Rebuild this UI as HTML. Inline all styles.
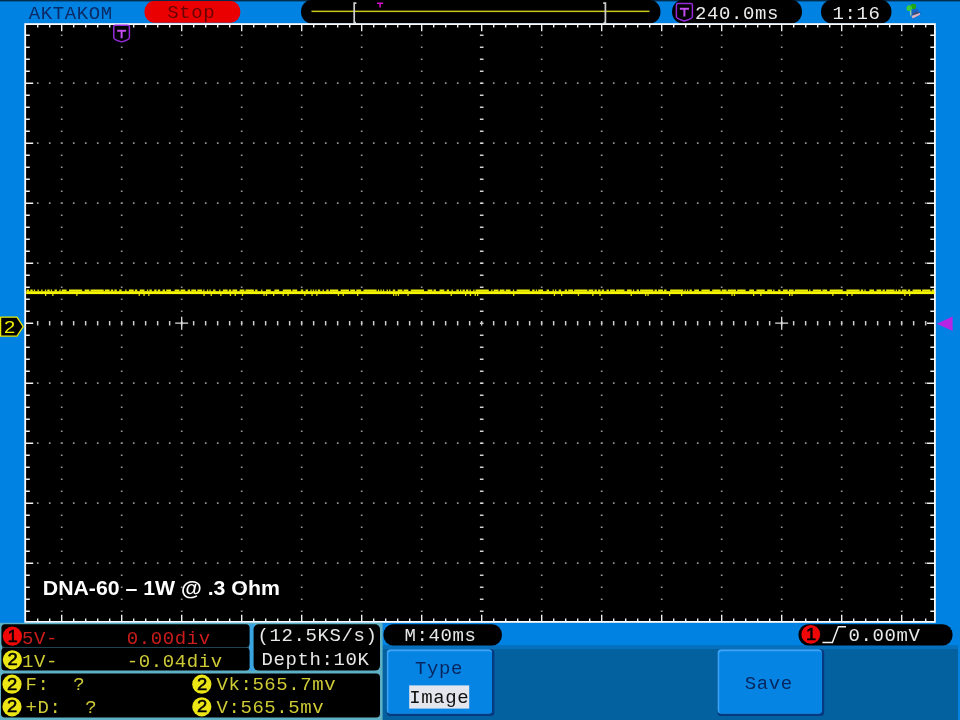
<!DOCTYPE html>
<html lang="en">
<head>
<meta charset="utf-8">
<title>AKTAKOM oscilloscope - DNA-60 1W @ .3 Ohm</title>
<style>
html,body{margin:0;padding:0;background:#0082e2;overflow:hidden}
body{width:960px;height:720px}
svg{display:block;position:absolute;left:0;top:0;will-change:transform}
svg text{font-family:"Liberation Mono",monospace;font-size:19px;letter-spacing:0.6px;white-space:pre}
svg text.cal{font-family:"Liberation Sans",sans-serif;font-weight:bold;font-size:20px;letter-spacing:0}
svg text.ico{font-family:"Liberation Sans",sans-serif;font-weight:normal;letter-spacing:0}
</style>
</head>
<body>
<svg width="960" height="720" viewBox="0 0 960 720">

<rect x="0" y="0" width="960" height="720" fill="#0082e2"/>
<rect x="0" y="0" width="960" height="1.4" fill="#04223c" opacity="0.9"/>
<text transform="translate(28.7,19.2) scale(1,0.95)" xml:space="preserve" fill="#0a2a66" >AKTAKOM</text>
<rect x="144.4" y="1.1" width="96" height="21.6" rx="9.5" ry="10.8" fill="#ea0000"/>
<text transform="translate(167.2,18) scale(1,0.95)" xml:space="preserve" fill="#6a0404" >Stop</text>
<rect x="301" y="0" width="359.5" height="23.5" rx="10.5" ry="11.7" fill="#000"/>
<rect x="311.5" y="10.6" width="338" height="1.5" fill="#c8c81a"/>
<path d="M356.4 3.2 H354.2 V22.6 H356" fill="none" stroke="#cfcfcf" stroke-width="1.7"/>
<path d="M603.2 3.2 H605.4 V22.6 H603.6" fill="none" stroke="#cfcfcf" stroke-width="1.7"/>
<path d="M377 3.3 H383.2 M380.1 3.3 V7.6" fill="none" stroke="#d410c8" stroke-width="1.5"/>
<rect x="672" y="0" width="130" height="23.5" rx="10.5" ry="11.7" fill="#000"/>
<path d="M677.9 3.4 H690.9 Q692.4 3.4 692.4 4.9 V16.8 Q692.4 18.8 684.4 21.0 Q676.4 18.8 676.4 16.8 V4.9 Q676.4 3.4 677.9 3.4 Z" fill="#000" stroke="#962ad8" stroke-width="1.5" stroke-linejoin="round"/><path d="M679.8 8.8 H689.0 M684.4 8.8 V16.4" fill="none" stroke="#c44cf0" stroke-width="2"/>
<text transform="translate(695.0,19.2) scale(1,0.95)" xml:space="preserve" fill="#ececec" >240.0ms</text>
<rect x="821" y="0" width="70.5" height="23.5" rx="10.5" ry="11.7" fill="#000"/>
<text transform="translate(832.6,19.2) scale(1,0.95)" xml:space="preserve" fill="#ececec" >1:16</text>
<g><path d="M911.6 9.8 L916.6 8.2 L921.4 14 L913.2 19.2 L910.4 15.6 Z" fill="#1464c6"/><path d="M912.6 13.4 L917.4 11.6 L919 13.4 L913.4 15.8 Z" fill="#3c4c74"/><path d="M911.4 16 L919.6 13 L920.4 14.6 L912.8 18.6 Z" fill="#dcb4c0"/><path d="M910.6 10 L910.8 15.4" stroke="#9cd4a8" stroke-width="1.3" fill="none"/><ellipse cx="913.2" cy="6.4" rx="3" ry="2.7" fill="#22a414"/><ellipse cx="909.2" cy="8.2" rx="2.7" ry="2.9" fill="#3ccc3c"/></g>
<rect x="25.2" y="24.1" width="909.7" height="597.8" fill="#000"/>
<g><line x1="61.7" y1="34.4" x2="61.7" y2="619.9" stroke="#8e8e8e" stroke-width="1.8" stroke-dasharray="1.7 10.3"/>
<line x1="121.7" y1="34.4" x2="121.7" y2="619.9" stroke="#8e8e8e" stroke-width="1.8" stroke-dasharray="1.7 10.3"/>
<line x1="181.7" y1="34.4" x2="181.7" y2="619.9" stroke="#8e8e8e" stroke-width="1.8" stroke-dasharray="1.7 10.3"/>
<line x1="241.7" y1="34.4" x2="241.7" y2="619.9" stroke="#8e8e8e" stroke-width="1.8" stroke-dasharray="1.7 10.3"/>
<line x1="301.7" y1="34.4" x2="301.7" y2="619.9" stroke="#8e8e8e" stroke-width="1.8" stroke-dasharray="1.7 10.3"/>
<line x1="361.7" y1="34.4" x2="361.7" y2="619.9" stroke="#8e8e8e" stroke-width="1.8" stroke-dasharray="1.7 10.3"/>
<line x1="421.7" y1="34.4" x2="421.7" y2="619.9" stroke="#8e8e8e" stroke-width="1.8" stroke-dasharray="1.7 10.3"/>
<line x1="541.7" y1="34.4" x2="541.7" y2="619.9" stroke="#8e8e8e" stroke-width="1.8" stroke-dasharray="1.7 10.3"/>
<line x1="601.7" y1="34.4" x2="601.7" y2="619.9" stroke="#8e8e8e" stroke-width="1.8" stroke-dasharray="1.7 10.3"/>
<line x1="661.7" y1="34.4" x2="661.7" y2="619.9" stroke="#8e8e8e" stroke-width="1.8" stroke-dasharray="1.7 10.3"/>
<line x1="721.7" y1="34.4" x2="721.7" y2="619.9" stroke="#8e8e8e" stroke-width="1.8" stroke-dasharray="1.7 10.3"/>
<line x1="781.7" y1="34.4" x2="781.7" y2="619.9" stroke="#8e8e8e" stroke-width="1.8" stroke-dasharray="1.7 10.3"/>
<line x1="841.7" y1="34.4" x2="841.7" y2="619.9" stroke="#8e8e8e" stroke-width="1.8" stroke-dasharray="1.7 10.3"/>
<line x1="901.7" y1="34.4" x2="901.7" y2="619.9" stroke="#8e8e8e" stroke-width="1.8" stroke-dasharray="1.7 10.3"/>
<line x1="36.9" y1="83.2" x2="932.9" y2="83.2" stroke="#8e8e8e" stroke-width="1.8" stroke-dasharray="1.7 10.3"/>
<line x1="36.9" y1="143.2" x2="932.9" y2="143.2" stroke="#8e8e8e" stroke-width="1.8" stroke-dasharray="1.7 10.3"/>
<line x1="36.9" y1="203.2" x2="932.9" y2="203.2" stroke="#8e8e8e" stroke-width="1.8" stroke-dasharray="1.7 10.3"/>
<line x1="36.9" y1="263.2" x2="932.9" y2="263.2" stroke="#8e8e8e" stroke-width="1.8" stroke-dasharray="1.7 10.3"/>
<line x1="36.9" y1="383.2" x2="932.9" y2="383.2" stroke="#8e8e8e" stroke-width="1.8" stroke-dasharray="1.7 10.3"/>
<line x1="36.9" y1="443.2" x2="932.9" y2="443.2" stroke="#8e8e8e" stroke-width="1.8" stroke-dasharray="1.7 10.3"/>
<line x1="36.9" y1="503.2" x2="932.9" y2="503.2" stroke="#8e8e8e" stroke-width="1.8" stroke-dasharray="1.7 10.3"/>
<line x1="36.9" y1="563.2" x2="932.9" y2="563.2" stroke="#8e8e8e" stroke-width="1.8" stroke-dasharray="1.7 10.3"/>
<line x1="481.7" y1="34.4" x2="481.7" y2="619.9" stroke="#d2d2d2" stroke-width="3.6" stroke-dasharray="1.6 10.4"/>
<line x1="36.9" y1="323.2" x2="932.9" y2="323.2" stroke="#cccccc" stroke-width="4.6" stroke-dasharray="1.5 10.5"/>
<path d="M175.2 323.2 H188.2 M181.7 316.7 V329.7" stroke="#dedede" stroke-width="1.3" fill="none"/>
<path d="M775.2 323.2 H788.2 M781.7 316.7 V329.7" stroke="#dedede" stroke-width="1.3" fill="none"/>
<path d="M25.2 35.2 h4.6 M934.9 35.2 h-4.6 M25.2 47.2 h4.6 M934.9 47.2 h-4.6 M25.2 59.2 h4.6 M934.9 59.2 h-4.6 M25.2 71.2 h4.6 M934.9 71.2 h-4.6 M25.2 83.2 h8 M934.9 83.2 h-8 M25.2 95.2 h4.6 M934.9 95.2 h-4.6 M25.2 107.2 h4.6 M934.9 107.2 h-4.6 M25.2 119.2 h4.6 M934.9 119.2 h-4.6 M25.2 131.2 h4.6 M934.9 131.2 h-4.6 M25.2 143.2 h8 M934.9 143.2 h-8 M25.2 155.2 h4.6 M934.9 155.2 h-4.6 M25.2 167.2 h4.6 M934.9 167.2 h-4.6 M25.2 179.2 h4.6 M934.9 179.2 h-4.6 M25.2 191.2 h4.6 M934.9 191.2 h-4.6 M25.2 203.2 h8 M934.9 203.2 h-8 M25.2 215.2 h4.6 M934.9 215.2 h-4.6 M25.2 227.2 h4.6 M934.9 227.2 h-4.6 M25.2 239.2 h4.6 M934.9 239.2 h-4.6 M25.2 251.2 h4.6 M934.9 251.2 h-4.6 M25.2 263.2 h8 M934.9 263.2 h-8 M25.2 275.2 h4.6 M934.9 275.2 h-4.6 M25.2 287.2 h4.6 M934.9 287.2 h-4.6 M25.2 299.2 h4.6 M934.9 299.2 h-4.6 M25.2 311.2 h4.6 M934.9 311.2 h-4.6 M25.2 323.2 h8 M934.9 323.2 h-8 M25.2 335.2 h4.6 M934.9 335.2 h-4.6 M25.2 347.2 h4.6 M934.9 347.2 h-4.6 M25.2 359.2 h4.6 M934.9 359.2 h-4.6 M25.2 371.2 h4.6 M934.9 371.2 h-4.6 M25.2 383.2 h8 M934.9 383.2 h-8 M25.2 395.2 h4.6 M934.9 395.2 h-4.6 M25.2 407.2 h4.6 M934.9 407.2 h-4.6 M25.2 419.2 h4.6 M934.9 419.2 h-4.6 M25.2 431.2 h4.6 M934.9 431.2 h-4.6 M25.2 443.2 h8 M934.9 443.2 h-8 M25.2 455.2 h4.6 M934.9 455.2 h-4.6 M25.2 467.2 h4.6 M934.9 467.2 h-4.6 M25.2 479.2 h4.6 M934.9 479.2 h-4.6 M25.2 491.2 h4.6 M934.9 491.2 h-4.6 M25.2 503.2 h8 M934.9 503.2 h-8 M25.2 515.2 h4.6 M934.9 515.2 h-4.6 M25.2 527.2 h4.6 M934.9 527.2 h-4.6 M25.2 539.2 h4.6 M934.9 539.2 h-4.6 M25.2 551.2 h4.6 M934.9 551.2 h-4.6 M25.2 563.2 h8 M934.9 563.2 h-8 M25.2 575.2 h4.6 M934.9 575.2 h-4.6 M25.2 587.2 h4.6 M934.9 587.2 h-4.6 M25.2 599.2 h4.6 M934.9 599.2 h-4.6 M25.2 611.2 h4.6 M934.9 611.2 h-4.6 M37.7 24.1 v3.3 M37.7 621.9 v-3.3 M49.7 24.1 v3.3 M49.7 621.9 v-3.3 M61.7 24.1 v7.2 M61.7 621.9 v-7.2 M73.7 24.1 v3.3 M73.7 621.9 v-3.3 M85.7 24.1 v3.3 M85.7 621.9 v-3.3 M97.7 24.1 v3.3 M97.7 621.9 v-3.3 M109.7 24.1 v3.3 M109.7 621.9 v-3.3 M121.7 24.1 v7.2 M121.7 621.9 v-7.2 M133.7 24.1 v3.3 M133.7 621.9 v-3.3 M145.7 24.1 v3.3 M145.7 621.9 v-3.3 M157.7 24.1 v3.3 M157.7 621.9 v-3.3 M169.7 24.1 v3.3 M169.7 621.9 v-3.3 M181.7 24.1 v7.2 M181.7 621.9 v-7.2 M193.7 24.1 v3.3 M193.7 621.9 v-3.3 M205.7 24.1 v3.3 M205.7 621.9 v-3.3 M217.7 24.1 v3.3 M217.7 621.9 v-3.3 M229.7 24.1 v3.3 M229.7 621.9 v-3.3 M241.7 24.1 v7.2 M241.7 621.9 v-7.2 M253.7 24.1 v3.3 M253.7 621.9 v-3.3 M265.7 24.1 v3.3 M265.7 621.9 v-3.3 M277.7 24.1 v3.3 M277.7 621.9 v-3.3 M289.7 24.1 v3.3 M289.7 621.9 v-3.3 M301.7 24.1 v7.2 M301.7 621.9 v-7.2 M313.7 24.1 v3.3 M313.7 621.9 v-3.3 M325.7 24.1 v3.3 M325.7 621.9 v-3.3 M337.7 24.1 v3.3 M337.7 621.9 v-3.3 M349.7 24.1 v3.3 M349.7 621.9 v-3.3 M361.7 24.1 v7.2 M361.7 621.9 v-7.2 M373.7 24.1 v3.3 M373.7 621.9 v-3.3 M385.7 24.1 v3.3 M385.7 621.9 v-3.3 M397.7 24.1 v3.3 M397.7 621.9 v-3.3 M409.7 24.1 v3.3 M409.7 621.9 v-3.3 M421.7 24.1 v7.2 M421.7 621.9 v-7.2 M433.7 24.1 v3.3 M433.7 621.9 v-3.3 M445.7 24.1 v3.3 M445.7 621.9 v-3.3 M457.7 24.1 v3.3 M457.7 621.9 v-3.3 M469.7 24.1 v3.3 M469.7 621.9 v-3.3 M481.7 24.1 v7.2 M481.7 621.9 v-7.2 M493.7 24.1 v3.3 M493.7 621.9 v-3.3 M505.7 24.1 v3.3 M505.7 621.9 v-3.3 M517.7 24.1 v3.3 M517.7 621.9 v-3.3 M529.7 24.1 v3.3 M529.7 621.9 v-3.3 M541.7 24.1 v7.2 M541.7 621.9 v-7.2 M553.7 24.1 v3.3 M553.7 621.9 v-3.3 M565.7 24.1 v3.3 M565.7 621.9 v-3.3 M577.7 24.1 v3.3 M577.7 621.9 v-3.3 M589.7 24.1 v3.3 M589.7 621.9 v-3.3 M601.7 24.1 v7.2 M601.7 621.9 v-7.2 M613.7 24.1 v3.3 M613.7 621.9 v-3.3 M625.7 24.1 v3.3 M625.7 621.9 v-3.3 M637.7 24.1 v3.3 M637.7 621.9 v-3.3 M649.7 24.1 v3.3 M649.7 621.9 v-3.3 M661.7 24.1 v7.2 M661.7 621.9 v-7.2 M673.7 24.1 v3.3 M673.7 621.9 v-3.3 M685.7 24.1 v3.3 M685.7 621.9 v-3.3 M697.7 24.1 v3.3 M697.7 621.9 v-3.3 M709.7 24.1 v3.3 M709.7 621.9 v-3.3 M721.7 24.1 v7.2 M721.7 621.9 v-7.2 M733.7 24.1 v3.3 M733.7 621.9 v-3.3 M745.7 24.1 v3.3 M745.7 621.9 v-3.3 M757.7 24.1 v3.3 M757.7 621.9 v-3.3 M769.7 24.1 v3.3 M769.7 621.9 v-3.3 M781.7 24.1 v7.2 M781.7 621.9 v-7.2 M793.7 24.1 v3.3 M793.7 621.9 v-3.3 M805.7 24.1 v3.3 M805.7 621.9 v-3.3 M817.7 24.1 v3.3 M817.7 621.9 v-3.3 M829.7 24.1 v3.3 M829.7 621.9 v-3.3 M841.7 24.1 v7.2 M841.7 621.9 v-7.2 M853.7 24.1 v3.3 M853.7 621.9 v-3.3 M865.7 24.1 v3.3 M865.7 621.9 v-3.3 M877.7 24.1 v3.3 M877.7 621.9 v-3.3 M889.7 24.1 v3.3 M889.7 621.9 v-3.3 M901.7 24.1 v7.2 M901.7 621.9 v-7.2 M913.7 24.1 v3.3 M913.7 621.9 v-3.3 M925.7 24.1 v3.3 M925.7 621.9 v-3.3" stroke="#f2f2f2" stroke-width="1.4" fill="none"/>
<rect x="25.2" y="24.1" width="909.7" height="597.8" fill="none" stroke="#fbfbfb" stroke-width="1.8"/></g>
<g><rect x="26.2" y="291.20000000000005" width="908.2" height="2.9" fill="#f6f600"/>
<path d="M26.7 290.4 h2.4 M30.3 290.4 h2.4 M33.8 290.4 h1.3 M37.5 290.4 h1.3 M41.2 290.4 h1.3 M44.9 290.4 h1.3 M47.3 290.4 h2.4 M50.8 290.4 h1.3 M54.5 290.4 h2.4 M59.3 290.4 h1.3 M61.8 290.4 h4.8 M69.0 290.4 h13.2 M84.6 290.4 h4.8 M90.5 290.4 h13.2 M104.8 290.4 h4.8 M110.8 290.4 h2.4 M114.4 290.4 h2.4 M119.2 290.4 h2.4 M125.2 290.4 h1.3 M128.9 290.4 h4.8 M134.9 290.4 h2.4 M139.7 290.4 h4.8 M146.9 290.4 h1.3 M149.4 290.4 h2.4 M154.2 290.4 h2.4 M157.8 290.4 h2.4 M162.6 290.4 h2.4 M166.2 290.4 h4.8 M174.6 290.4 h4.8 M180.5 290.4 h4.8 M187.7 290.4 h2.4 M191.3 290.4 h4.8 M197.3 290.4 h4.8 M203.2 290.4 h1.3 M206.9 290.4 h1.3 M209.4 290.4 h1.3 M213.1 290.4 h2.4 M219.1 290.4 h1.3 M222.8 290.4 h4.8 M228.8 290.4 h2.4 M232.4 290.4 h4.8 M239.6 290.4 h4.8 M245.5 290.4 h8.4 M255.1 290.4 h2.4 M261.1 290.4 h1.3 M266.0 290.4 h4.8 M274.4 290.4 h4.8 M282.8 290.4 h8.4 M292.4 290.4 h4.8 M300.8 290.4 h2.4 M305.6 290.4 h2.4 M310.4 290.4 h1.3 M312.8 290.4 h1.3 M315.3 290.4 h1.3 M317.8 290.4 h2.4 M322.6 290.4 h1.3 M326.3 290.4 h2.4 M329.9 290.4 h8.4 M340.7 290.4 h8.4 M350.3 290.4 h4.8 M356.3 290.4 h4.8 M363.5 290.4 h13.2 M377.9 290.4 h1.3 M380.4 290.4 h1.3 M382.9 290.4 h1.3 M386.6 290.4 h1.3 M389.1 290.4 h1.3 M392.8 290.4 h2.4 M397.6 290.4 h4.8 M403.6 290.4 h4.8 M410.8 290.4 h13.2 M427.6 290.4 h4.8 M433.5 290.4 h2.4 M439.5 290.4 h4.8 M446.7 290.4 h2.4 M451.5 290.4 h1.3 M456.4 290.4 h2.4 M460.0 290.4 h1.3 M462.5 290.4 h2.4 M466.0 290.4 h2.4 M469.5 290.4 h1.3 M473.2 290.4 h1.3 M475.6 290.4 h13.2 M491.2 290.4 h1.3 M493.7 290.4 h4.8 M499.7 290.4 h4.8 M505.7 290.4 h4.8 M512.9 290.4 h1.3 M516.6 290.4 h13.2 M532.2 290.4 h2.4 M535.8 290.4 h1.3 M538.2 290.4 h4.8 M546.6 290.4 h2.4 M552.6 290.4 h1.3 M555.0 290.4 h1.3 M558.7 290.4 h2.4 M564.7 290.4 h2.4 M568.2 290.4 h4.8 M574.2 290.4 h13.2 M588.5 290.4 h4.8 M594.5 290.4 h2.4 M598.1 290.4 h2.4 M601.7 290.4 h2.4 M606.5 290.4 h2.4 M610.1 290.4 h4.8 M616.1 290.4 h8.4 M626.9 290.4 h4.8 M632.9 290.4 h1.3 M636.6 290.4 h2.4 M640.1 290.4 h13.2 M654.5 290.4 h2.4 M658.1 290.4 h4.8 M664.1 290.4 h2.4 M670.1 290.4 h13.2 M684.5 290.4 h1.3 M686.9 290.4 h1.3 M689.4 290.4 h2.4 M694.2 290.4 h4.8 M701.4 290.4 h8.4 M712.2 290.4 h8.4 M721.8 290.4 h4.8 M727.7 290.4 h8.4 M737.2 290.4 h8.4 M749.2 290.4 h4.8 M756.4 290.4 h8.4 M767.2 290.4 h4.8 M773.2 290.4 h1.3 M778.1 290.4 h2.4 M782.9 290.4 h4.8 M788.8 290.4 h4.8 M794.8 290.4 h13.2 M809.1 290.4 h1.3 M812.8 290.4 h8.4 M822.4 290.4 h4.8 M829.6 290.4 h13.2 M846.4 290.4 h13.2 M860.8 290.4 h2.4 M864.4 290.4 h1.3 M869.3 290.4 h4.8 M876.5 290.4 h4.8 M882.5 290.4 h2.4 M886.1 290.4 h8.4 M895.7 290.4 h1.3 M898.2 290.4 h2.4 M901.8 290.4 h4.8 M907.8 290.4 h2.4 M912.6 290.4 h8.4 M922.1 290.4 h8.4 M931.7 290.4 h2.2" stroke="#f0f000" stroke-width="2" fill="none"/>
<path d="M45.0 294.9 h1.3 M52.2 294.9 h1.3 M76.2 294.9 h1.3 M138.6 294.9 h1.3 M143.4 294.9 h1.3 M148.2 294.9 h1.3 M203.4 294.9 h1.3 M210.6 294.9 h1.3 M220.2 294.9 h1.3 M229.8 294.9 h1.3 M234.6 294.9 h1.3 M241.8 294.9 h1.3 M263.4 294.9 h1.3 M265.8 294.9 h1.3 M273.0 294.9 h1.3 M282.6 294.9 h1.3 M287.4 294.9 h1.3 M304.2 294.9 h1.3 M311.4 294.9 h1.3 M316.2 294.9 h1.3 M337.8 294.9 h1.3 M342.6 294.9 h1.3 M357.0 294.9 h1.3 M393.0 294.9 h1.3 M395.4 294.9 h1.3 M397.8 294.9 h1.3 M407.4 294.9 h1.3 M450.6 294.9 h1.3 M465.0 294.9 h1.3 M469.8 294.9 h1.3 M474.6 294.9 h1.3 M477.0 294.9 h1.3 M513.0 294.9 h1.3 M553.8 294.9 h1.3 M561.0 294.9 h1.3 M577.8 294.9 h1.3 M592.2 294.9 h1.3 M599.4 294.9 h1.3 M630.6 294.9 h1.3 M645.0 294.9 h1.3 M647.4 294.9 h1.3 M669.0 294.9 h1.3 M681.0 294.9 h1.3 M731.4 294.9 h1.3 M733.8 294.9 h1.3 M753.0 294.9 h1.3 M760.2 294.9 h1.3 M789.0 294.9 h1.3 M791.4 294.9 h1.3 M832.2 294.9 h1.3 M846.6 294.9 h1.3 M851.4 294.9 h1.3 M904.2 294.9 h1.3 M909.0 294.9 h1.3" stroke="#dcdc00" stroke-width="2" fill="none"/></g>
<path d="M115.3 25.3 H127.9 Q129.4 25.3 129.4 26.8 V37.7 Q129.4 39.7 121.6 41.9 Q113.8 39.7 113.8 37.7 V26.8 Q113.8 25.3 115.3 25.3 Z" fill="#000" stroke="#962ad8" stroke-width="1.5" stroke-linejoin="round"/><path d="M117.2 30.7 H126.0 M121.6 30.7 V38.3" fill="none" stroke="#c44cf0" stroke-width="2"/>
<path d="M0.6 317.2 H17 L23.2 326.6 L17 336.2 H0.6 Z" fill="#000" stroke="#e8e800" stroke-width="1.3" stroke-linejoin="round"/>
<text class="ico" transform="translate(3.9,333) scale(1.16,1)" fill="#f0f000" style="font-size:17.4px">2</text>
<path d="M936.8 323.8 L952.6 316.6 V331 Z" fill="#b624e4"/>
<text class="cal" x="42.8" y="594.8" fill="#ffffff" textLength="237" lengthAdjust="spacingAndGlyphs">DNA-60 – 1W @ .3 Ohm</text>
<rect x="381.5" y="645.6" width="576.5" height="75" fill="#0461a0"/>
<rect x="381.5" y="645.6" width="576.5" height="3.4" fill="#0670bc"/>
<rect x="0" y="622.8" width="382.6" height="98" fill="#5eb0c4"/>
<rect x="249" y="624" width="6" height="47" fill="#3aa4e0"/>
<rect x="2" y="646" width="247" height="3" fill="#2a586c"/>
<rect x="1.4" y="624.2" width="248.2" height="22.7" rx="3.5" fill="#000"/>
<rect x="1.4" y="647.8" width="248.2" height="22.8" rx="3.5" fill="#000"/>
<rect x="253.6" y="624.2" width="126.4" height="46.4" rx="5" fill="#000"/>
<rect x="1.0" y="673.4" width="379" height="44.2" rx="4" fill="#000"/>
<circle cx="12.4" cy="636.2" r="9.6" fill="#f00808"/><text class="ico" transform="translate(12.6,641.7) scale(1.18,1)" text-anchor="middle" fill="#000" stroke="#000" stroke-width="0.45" style="font-size:15.6px">1</text>
<text transform="translate(22.0,643.6) scale(1,0.95)" xml:space="preserve" fill="#cc1c1c" >5V-</text>
<text transform="translate(126.8,643.6) scale(1,0.95)" xml:space="preserve" fill="#cc1c1c" >0.00div</text>
<circle cx="12.4" cy="659.8" r="9.6" fill="#ece614"/><text class="ico" transform="translate(12.6,665.3) scale(1.18,1)" text-anchor="middle" fill="#000" stroke="#000" stroke-width="0.45" style="font-size:15.6px">2</text>
<text transform="translate(22.0,667.2) scale(1,0.95)" xml:space="preserve" fill="#cecb36" >1V-</text>
<text transform="translate(126.8,667.2) scale(1,0.95)" xml:space="preserve" fill="#cecb36" >-0.04div</text>
<circle cx="12.0" cy="684.2" r="9.6" fill="#ece614"/><text class="ico" transform="translate(12.2,689.7) scale(1.18,1)" text-anchor="middle" fill="#000" stroke="#000" stroke-width="0.45" style="font-size:15.6px">2</text>
<text transform="translate(25.4,690.2) scale(1,0.95)" xml:space="preserve" fill="#cecb36" >F:  ?</text>
<circle cx="12.0" cy="706.8" r="9.6" fill="#ece614"/><text class="ico" transform="translate(12.2,712.3) scale(1.18,1)" text-anchor="middle" fill="#000" stroke="#000" stroke-width="0.45" style="font-size:15.6px">2</text>
<text transform="translate(25.4,712.8) scale(1,0.95)" xml:space="preserve" fill="#cecb36" >+D:  ?</text>
<circle cx="201.8" cy="684.2" r="9.6" fill="#ece614"/><text class="ico" transform="translate(202.0,689.7) scale(1.18,1)" text-anchor="middle" fill="#000" stroke="#000" stroke-width="0.45" style="font-size:15.6px">2</text>
<text transform="translate(216.4,690.2) scale(1,0.95)" xml:space="preserve" fill="#cecb36" >Vk:565.7mv</text>
<circle cx="201.8" cy="706.8" r="9.6" fill="#ece614"/><text class="ico" transform="translate(202.0,712.3) scale(1.18,1)" text-anchor="middle" fill="#000" stroke="#000" stroke-width="0.45" style="font-size:15.6px">2</text>
<text transform="translate(216.4,712.8) scale(1,0.95)" xml:space="preserve" fill="#cecb36" >V:565.5mv</text>
<text transform="translate(257.6,641.2) scale(1,0.95)" xml:space="preserve" fill="#e8e8e8" >(12.5KS/s)</text>
<text transform="translate(261.6,664.6) scale(1,0.95)" xml:space="preserve" fill="#e8e8e8" >Depth:10K</text>
<rect x="383.4" y="624.2" width="118.6" height="21.4" rx="10" ry="10.7" fill="#000"/>
<text transform="translate(404.6,641) scale(1,0.95)" xml:space="preserve" fill="#e8e8e8" >M:40ms</text>
<rect x="798.4" y="624.2" width="154.2" height="21.4" rx="10" ry="10.7" fill="#000"/>
<circle cx="810.8" cy="634.4" r="9.4" fill="#f00808"/><text class="ico" transform="translate(811.0,639.9) scale(1.18,1)" text-anchor="middle" fill="#000" stroke="#000" stroke-width="0.45" style="font-size:15.6px">1</text>
<path d="M822.4 642.6 H832.4 L838.4 626.8 H846" fill="none" stroke="#f0f0f0" stroke-width="1.5"/>
<text transform="translate(848.6,641.4) scale(1,0.95)" xml:space="preserve" fill="#e8e8e8" >0.00mV</text>
<rect x="386.8" y="649.2" width="107.6" height="66.8" rx="3.5" fill="#053a80"/><rect x="386.8" y="649.2" width="105.2" height="64.4" rx="3.5" fill="#3ca4f4"/><rect x="388.4" y="651.2" width="103.6" height="62.4" rx="2.5" fill="#0584e4"/>
<text transform="translate(415.0,673.6) scale(1,0.95)" xml:space="preserve" fill="#08265e" >Type</text>
<rect x="409.2" y="685.4" width="60" height="23.2" fill="#e4e6ee"/>
<text transform="translate(409.2,703.2) scale(1,0.95)" xml:space="preserve" fill="#101010" >Image</text>
<rect x="717.6" y="649.2" width="106.6" height="66.8" rx="3.5" fill="#053a80"/><rect x="717.6" y="649.2" width="104.2" height="64.4" rx="3.5" fill="#3ca4f4"/><rect x="719.2" y="651.2" width="102.6" height="62.4" rx="2.5" fill="#0584e4"/>
<text transform="translate(744.8,688.6) scale(1,0.95)" xml:space="preserve" fill="#08265e" >Save</text>
</svg>
</body>
</html>
